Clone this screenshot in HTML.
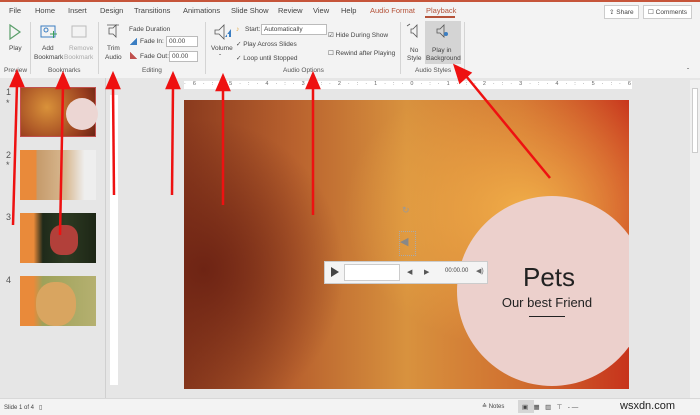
<!DOCTYPE html>
<html><head><meta charset="utf-8"><style>
*{margin:0;padding:0;box-sizing:border-box}
body{width:700px;height:415px;overflow:hidden;background:#e6e6e6;font-family:"Liberation Sans",sans-serif;position:relative;color:#444}
.a{position:absolute}
.t{font-size:6.5px;color:#444;white-space:nowrap}
.tab{position:absolute;top:6px;font-size:7.5px;color:#444}
.lbl{position:absolute;top:67px;font-size:6.5px;color:#555}
.sep{position:absolute;top:22px;width:1px;height:52px;background:#d4d4d4}
.thumb{position:absolute;left:20px;width:76px;height:50px}
.num{position:absolute;left:6px;font-size:9px;color:#555}
</style></head><body>
<div class="a" style="left:0;top:0;width:700px;height:2px;background:#c6553a"></div>
<div class="a" style="left:0;top:2px;width:700px;height:76px;background:#f3f3f3"></div>
<div class="tab" style="left:9px">File</div>
<div class="tab" style="left:35px">Home</div>
<div class="tab" style="left:68px">Insert</div>
<div class="tab" style="left:100px">Design</div>
<div class="tab" style="left:134px">Transitions</div>
<div class="tab" style="left:183px">Animations</div>
<div class="tab" style="left:231px">Slide Show</div>
<div class="tab" style="left:278px">Review</div>
<div class="tab" style="left:313px">View</div>
<div class="tab" style="left:341px">Help</div>
<div class="tab" style="left:370px;color:#b5533a">Audio Format</div>
<div class="tab" style="left:426px;color:#b5533a">Playback</div>
<div class="a" style="left:425px;top:16px;width:30px;height:1.5px;background:#b5533a"></div>
<div class="a t" style="left:604px;top:5px;border:1px solid #ccc;background:#fff;padding:2px 4px">⇪ Share</div>
<div class="a t" style="left:643px;top:5px;border:1px solid #ccc;background:#fff;padding:2px 4px">☐ Comments</div>
<svg class="a" style="left:8px;top:24px" width="14" height="16"><path d="M2 1 L12 8 L2 15 Z" fill="none" stroke="#5a9e6a" stroke-width="1.2"/></svg>
<div class="a t" style="left:9px;top:45px">Play</div>
<div class="sep" style="left:30px"></div>
<svg class="a" style="left:40px;top:25px" width="18" height="16"><rect x="1" y="1" width="14" height="11" fill="none" stroke="#3b7ec2"/><circle cx="6" cy="5" r="2" fill="none" stroke="#3b7ec2"/><path d="M10 9h7M13.5 6v7" stroke="#3a9e5a"/></svg>
<div class="a t" style="left:42px;top:45px">Add</div>
<div class="a t" style="left:34px;top:54px">Bookmark</div>
<svg class="a" style="left:71px;top:25px" width="18" height="16"><rect x="1" y="1" width="14" height="11" fill="none" stroke="#bbb"/></svg>
<div class="a t" style="left:69px;top:45px;color:#aaa">Remove</div>
<div class="a t" style="left:64px;top:54px;color:#aaa">Bookmark</div>
<div class="sep" style="left:98px"></div>
<svg class="a" style="left:106px;top:23px" width="14" height="16"><path d="M1 2h12M3 5l4 0l3-3v12l-3-3h-4z" fill="none" stroke="#555" stroke-width=".8"/></svg>
<div class="a t" style="left:107px;top:45px">Trim</div>
<div class="a t" style="left:105px;top:54px">Audio</div>
<div class="a t" style="left:129px;top:26px">Fade Duration</div>
<div class="a" style="left:130px;top:38px;width:7px;height:7px;background:linear-gradient(135deg,transparent 50%,#3b7ec2 50%)"></div>
<div class="a t" style="left:140px;top:38px">Fade In:</div>
<div class="a t" style="left:166px;top:36px;width:32px;height:11px;border:1px solid #bbb;background:#fff;padding:1px 2px">00.00</div>
<div class="a" style="left:130px;top:52px;width:7px;height:7px;background:linear-gradient(225deg,transparent 50%,#c0504d 50%)"></div>
<div class="a t" style="left:140px;top:53px">Fade Out:</div>
<div class="a t" style="left:169px;top:51px;width:29px;height:11px;border:1px solid #bbb;background:#fff;padding:1px 2px">00.00</div>
<div class="sep" style="left:205px"></div>
<svg class="a" style="left:214px;top:23px" width="18" height="18"><path d="M1 7h4l5-5v14l-5-5h-4z" fill="none" stroke="#555" stroke-width=".8"/><path d="M11 14h2v-3h2v3h2v-8" fill="#3b7ec2"/></svg>
<div class="a t" style="left:211px;top:45px">Volume</div>
<div class="a t" style="left:219px;top:54px">ˇ</div>
<div class="a t" style="left:236px;top:26px;color:#e0a030">♪</div>
<div class="a t" style="left:245px;top:26px">Start:</div>
<div class="a t" style="left:261px;top:24px;width:66px;height:11px;border:1px solid #bbb;background:#fff;padding:1px 2px">Automatically</div>
<div class="a t" style="left:236px;top:40px">✓ Play Across Slides</div>
<div class="a t" style="left:236px;top:54px">✓ Loop until Stopped</div>
<div class="a t" style="left:328px;top:31px">☑ Hide During Show</div>
<div class="a t" style="left:328px;top:49px">☐ Rewind after Playing</div>
<div class="sep" style="left:400px"></div>
<svg class="a" style="left:406px;top:23px" width="14" height="16"><path d="M1 3l3-2M5 6h2l4-4v12l-4-4h-2z" fill="none" stroke="#555" stroke-width=".8"/></svg>
<div class="a t" style="left:410px;top:47px">No</div>
<div class="a t" style="left:407px;top:55px">Style</div>
<div class="a" style="left:425px;top:21px;width:36px;height:43px;background:#d4d4d4"></div>
<svg class="a" style="left:436px;top:24px" width="14" height="16"><path d="M1 5h3l4-4v12l-4-4h-3z" fill="none" stroke="#555" stroke-width=".8"/><circle cx="10" cy="10" r="2" fill="#3b7ec2"/></svg>
<div class="a t" style="left:432px;top:47px">Play in</div>
<div class="a t" style="left:426px;top:55px">Background</div>
<div class="sep" style="left:464px"></div>
<div class="lbl" style="left:4px">Preview</div>
<div class="lbl" style="left:48px">Bookmarks</div>
<div class="lbl" style="left:142px">Editing</div>
<div class="lbl" style="left:283px">Audio Options</div>
<div class="lbl" style="left:415px">Audio Styles</div>
<div class="a t" style="left:687px;top:68px">ˆ</div>
<div class="a" style="left:184px;top:81px;width:448px;height:8px;background:#fff;font-size:5.5px;color:#666;letter-spacing:7px;overflow:hidden;white-space:nowrap">·6·:·5·:·4·:·3·:·2·:·1·:·0·:·1·:·2·:·3·:·4·:·5·:·6·</div>
<div class="a" style="left:110px;top:95px;width:8px;height:290px;background:#fff"></div>
<div class="a" style="left:105px;top:78px;width:1px;height:320px;background:#d0d0d0"></div>
<div class="a" style="left:690px;top:80px;width:10px;height:318px;background:#f0f0f0"></div>
<div class="a" style="left:692px;top:88px;width:6px;height:65px;background:#fff;border:1px solid #ccc"></div>
<div class="num" style="top:87px">1</div><div class="num" style="top:98px">*</div>
<div class="thumb" style="top:87px;border:1.5px solid #c0504d;background:radial-gradient(circle at 35% 40%,#d9923a,#9a3e1e 70%,#6b2414)"><div class="a" style="left:45px;top:10px;width:32px;height:32px;border-radius:50%;background:#ecd6d3"></div></div>
<div class="num" style="top:150px">2</div><div class="num" style="top:160px">*</div>
<div class="thumb" style="top:150px;background:linear-gradient(90deg,#e98a3a 0 22%,#c59a6a 22%,#d8b890 60%,#eee 85%)"></div>
<div class="num" style="top:212px">3</div>
<div class="thumb" style="top:213px;background:linear-gradient(90deg,#e98a3a 0 18%,#1f2a1a 30%,#2d3a22 60%,#1d2616)"><div class="a" style="left:30px;top:12px;width:28px;height:30px;border-radius:40%;background:#b2403a"></div></div>
<div class="num" style="top:275px">4</div>
<div class="thumb" style="top:276px;background:linear-gradient(90deg,#e98a3a 0 18%,#9ea25a 30%,#b5b070)"><div class="a" style="left:16px;top:6px;width:40px;height:44px;border-radius:45%;background:#d9a560"></div></div>
<div class="a" style="left:184px;top:100px;width:445px;height:289px;overflow:hidden;background:radial-gradient(ellipse 180px 140px at 340px 110px,#f0ad48,rgba(230,150,60,0) 100%),radial-gradient(ellipse 140px 150px at 20px 170px,#6e2414,rgba(110,36,20,0) 100%),linear-gradient(90deg,#8a3a1e 0%,#b9622e 25%,#d8923e 50%,#d07030 75%,#c7331c 100%)">
<div class="a" style="left:273px;top:96px;width:190px;height:190px;border-radius:50%;background:#ecd0cc"></div>
<div class="a" style="left:330px;top:162px;font-size:26px;color:#222;width:70px;text-align:center">Pets</div>
<div class="a" style="left:303px;top:195px;font-size:13px;color:#222;width:120px;text-align:center">Our best Friend</div>
<div class="a" style="left:345px;top:216px;width:36px;height:1px;background:#222"></div>
<div class="a" style="left:140px;top:161px;width:164px;height:23px;background:#f4f4f4;border:1px solid #ccc"></div>
<div class="a" style="left:147px;top:167px;width:0;height:0;border-left:8px solid #444;border-top:5px solid transparent;border-bottom:5px solid transparent"></div>
<div class="a" style="left:160px;top:164px;width:56px;height:17px;background:#fff;border:1px solid #ccc"></div>
<div class="a" style="left:223px;top:168px;font-size:7px;color:#555">◀</div>
<div class="a" style="left:240px;top:168px;font-size:7px;color:#555">▶</div>
<div class="a" style="left:261px;top:168px;font-size:6px;color:#444">00:00.00</div>
<div class="a" style="left:292px;top:167px;font-size:7px;color:#666">◀)</div>
<div class="a" style="left:215px;top:131px;width:17px;height:25px;border:1px dotted #aaa"></div>
<div class="a" style="left:216px;top:135px;font-size:11px;color:#888">◀</div>
<div class="a" style="left:218px;top:105px;font-size:9px;color:#999">↻</div>
</div>
<div class="a" style="left:0;top:398px;width:700px;height:17px;background:#f3f3f3;border-top:1px solid #d8d8d8"></div>
<div class="a t" style="left:4px;top:404px;font-size:6px">Slide 1 of 4 &nbsp; ▯</div>
<div class="a t" style="left:482px;top:403px;font-size:6px">≙ Notes</div>
<div class="a" style="left:518px;top:400px;width:16px;height:13px;background:#d6d6d6"></div>
<div class="a t" style="left:522px;top:403px">▣ &nbsp; ▦ &nbsp; ▥ &nbsp; ⊤ &nbsp; - —</div>
<div class="a" style="left:620px;top:400px;font-size:11px;color:#222">wsxdn.com</div>
<svg class="a" style="left:0;top:0" width="700" height="415">
<g stroke="#e11" stroke-width="2.5" fill="#e11">
<line x1="13" y1="225" x2="17" y2="84"/><path d="M11 86 L17 72 L23 86Z"/>
<line x1="60" y1="235" x2="63" y2="86"/><path d="M57 88 L63 74 L69 88Z"/>
<line x1="114" y1="195" x2="113" y2="86"/><path d="M107 88 L113 74 L119 88Z"/>
<line x1="172" y1="195" x2="173" y2="86"/><path d="M167 88 L173 74 L179 88Z"/>
<line x1="223" y1="205" x2="223" y2="88"/><path d="M217 90 L223 76 L229 90Z"/>
<line x1="313" y1="215" x2="313" y2="86"/><path d="M307 88 L313 74 L319 88Z"/>
<line x1="550" y1="178" x2="466" y2="76"/><path d="M460 82 L455 66 L470 73Z"/>
</g></svg>
</body></html>
